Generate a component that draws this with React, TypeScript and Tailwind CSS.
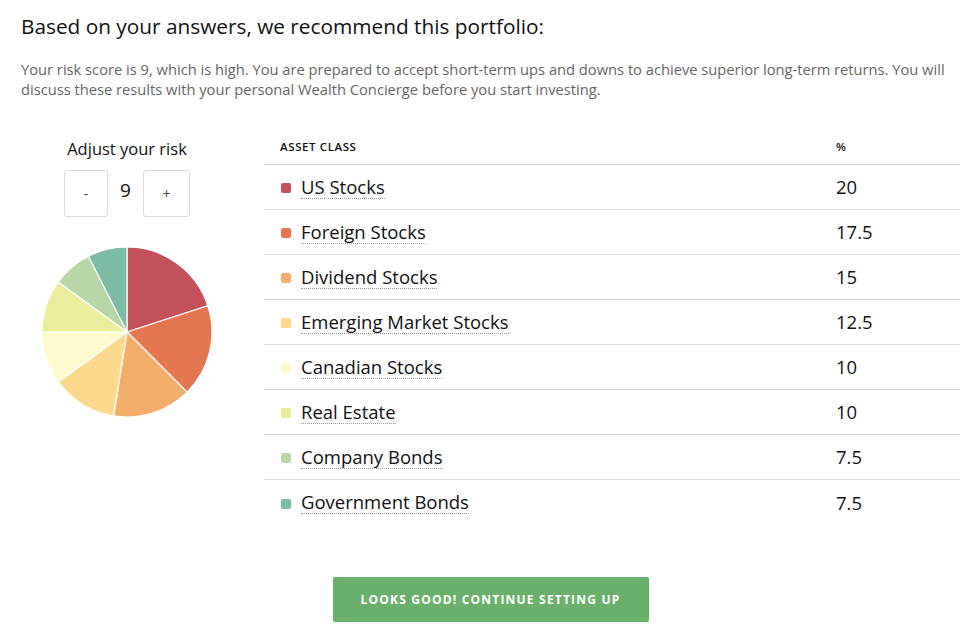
import React from "react";

const assets = [
  { name: "US Stocks", pct: 20, color: "#c4505a" },
  { name: "Foreign Stocks", pct: 17.5, color: "#e47752" },
  { name: "Dividend Stocks", pct: 15, color: "#f2ae6a" },
  { name: "Emerging Market Stocks", pct: 12.5, color: "#fdd98d" },
  { name: "Canadian Stocks", pct: 10, color: "#fffacb" },
  { name: "Real Estate", pct: 10, color: "#ebee9d" },
  { name: "Company Bonds", pct: 7.5, color: "#b7d7a6" },
  { name: "Government Bonds", pct: 7.5, color: "#7dbda4" },
];

function Pie() {
  const r = 85;
  const c = 86;
  let start = 0;
  const slices = assets.map((a) => {
    const end = start + (a.pct / 100) * Math.PI * 2;
    const x1 = c + r * Math.sin(start);
    const y1 = c - r * Math.cos(start);
    const x2 = c + r * Math.sin(end);
    const y2 = c - r * Math.cos(end);
    const large = end - start > Math.PI ? 1 : 0;
    const d = `M${c},${c} L${x1},${y1} A${r},${r} 0 ${large} 1 ${x2},${y2} Z`;
    start = end;
    return <path key={a.name} d={d} fill={a.color} stroke="#fff" strokeWidth="1.2" />;
  });
  return (
    <svg width="172" height="172" viewBox="0 0 172 172">
      {slices}
    </svg>
  );
}

export default function App() {
  return (
    <div
      className="w-[965px] h-[635px] bg-white text-[#222] pl-[21px] pr-[5px] overflow-hidden"
      style={{ fontFamily: "'Open Sans', Lato, sans-serif" }}
    >
      <h1 className="pt-[12px] text-[20.8px] leading-[28px] font-normal text-[#111]">
        Based on your answers, we recommend this portfolio:
      </h1>
      <p className="mt-[19px] text-[14.7px] leading-[20px] text-[#666]">
        Your risk score is 9, which is high. You are prepared to accept short-term ups and downs to achieve superior
        long-term returns. You will discuss these results with your personal Wealth Concierge before you start investing.
      </p>

      <div className="mt-[36px] flex">
        <div className="w-[212px] flex flex-col items-center">
          <div className="mt-[3px] text-[16.5px] leading-[22px] text-[#111]">Adjust your risk</div>
          <div className="mt-[10px] flex items-center">
            <button className="w-[44px] h-[47px] border border-[#ddd] rounded-[3px] text-[14px] text-[#444] bg-white">
              -
            </button>
            <div className="w-[35px] text-center text-[19px] text-[#111] -mt-[6px]">9</div>
            <button className="w-[47px] h-[47px] border border-[#ddd] rounded-[3px] text-[14px] text-[#444] bg-white">
              +
            </button>
          </div>
          <div className="mt-[29px]">
            <Pie />
          </div>
        </div>

        <div className="ml-[31px] w-[696px]">
          <div className="grid grid-cols-[572px_1fr] h-[30px] border-b border-[#ddd] text-[11.5px] font-semibold uppercase tracking-[0.6px] text-[#111] items-start">
            <div className="pl-[16px] pt-[3px]">Asset Class</div>
            <div className="pt-[3px]">%</div>
          </div>
          {assets.map((a, i) => (
            <div
              key={a.name}
              className={`grid grid-cols-[572px_1fr] h-[45px] items-center text-[18.5px] text-[#111] ${
                i < assets.length - 1 ? "border-b border-[#ddd]" : ""
              }`}
            >
              <div className="pl-[17px] flex items-center">
                <span className="w-[10px] h-[10px] rounded-[2px] mr-[10px] mt-[2px]" style={{ backgroundColor: a.color }} />
                <span className="leading-[22px] border-b border-dotted border-[#999]">{a.name}</span>
              </div>
              <div>{a.pct}</div>
            </div>
          ))}
        </div>
      </div>

      <div className="mt-[52px] flex justify-center">
        <button className="w-[316px] h-[45px] bg-[#69b06b] rounded-[2px] text-white text-[12px] font-bold uppercase tracking-[1.2px]">
          Looks Good! Continue Setting Up
        </button>
      </div>
    </div>
  );
}
